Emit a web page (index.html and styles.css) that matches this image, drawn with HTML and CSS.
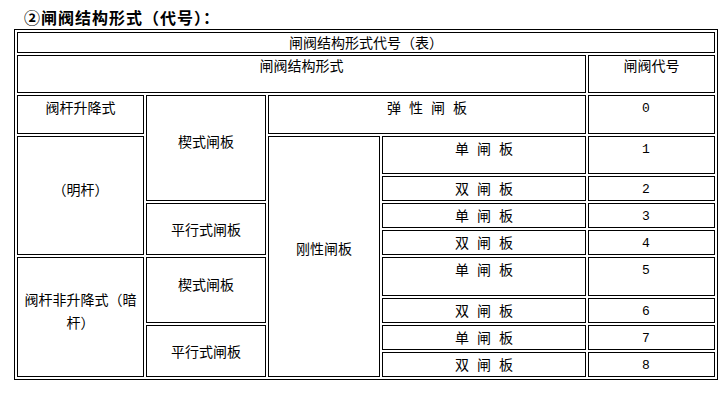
FILE: index.html
```html
<!DOCTYPE html>
<html lang="zh-CN">
<head>
<meta charset="utf-8">
<title>闸阀结构形式（代号）</title>
<link rel="stylesheet" href="styles.css">
</head>
<body>
<div class="page">
  <h3 class="title">②闸阀结构形式（代号）：</h3>
  <table class="gate">
    <colgroup>
      <col class="c1"><col class="c2"><col class="c3"><col class="c4"><col class="c5">
    </colgroup>
    <tr class="head h21">
      <td colspan="5" class="mid">闸阀结构形式代号（表）</td>
    </tr>
    <tr class="head h38">
      <td colspan="4">闸阀结构形式</td>
      <td>闸阀代号</td>
    </tr>
    <tr class="h39">
      <td>阀杆升降式</td>
      <td rowspan="3" class="mid up2">楔式闸板</td>
      <td colspan="2"><span class="sp">弹性闸板</span></td>
      <td class="num">0</td>
    </tr>
    <tr class="h38">
      <td rowspan="4" class="mid up">（明杆）</td>
      <td rowspan="8" class="mid up3">刚性闸板</td>
      <td><span class="sp">单闸板</span></td>
      <td class="num">1</td>
    </tr>
    <tr class="h25">
      <td><span class="sp">双闸板</span></td>
      <td class="num">2</td>
    </tr>
    <tr class="h25">
      <td rowspan="2" class="mid">平行式闸板</td>
      <td><span class="sp">单闸板</span></td>
      <td class="num">3</td>
    </tr>
    <tr class="h25">
      <td><span class="sp">双闸板</span></td>
      <td class="num">4</td>
    </tr>
    <tr class="h39">
      <td rowspan="4" class="mid up">阀杆非升降式（暗杆）</td>
      <td rowspan="2" class="mid up">楔式闸板</td>
      <td><span class="sp">单闸板</span></td>
      <td class="num">5</td>
    </tr>
    <tr class="h25">
      <td><span class="sp">双闸板</span></td>
      <td class="num">6</td>
    </tr>
    <tr class="h25">
      <td rowspan="2" class="mid">平行式闸板</td>
      <td><span class="sp">单闸板</span></td>
      <td class="num">7</td>
    </tr>
    <tr class="h25">
      <td><span class="sp">双闸板</span></td>
      <td class="num">8</td>
    </tr>
  </table>
</div>
</body>
</html>
```

FILE: styles.css
```css
html, body {
  margin: 0;
  background: #fff;
  color: #000;
  font-family: "Noto Sans CJK SC", sans-serif;
}

.page {
  padding: 7px 0 0 14px;
}

.title {
  margin: 0 0 2px 10px;
  font-size: 16px;
  line-height: 20px;
  font-weight: bold;
  letter-spacing: 1px;
}

.gate {
  border: 1px solid #000;
  border-spacing: 2px;
  table-layout: fixed;
  width: 704px;
  font-size: 14px;
  line-height: 23px;
}

.gate td {
  border: 1px solid #000;
  padding: 0 1px;
  text-align: center;
  vertical-align: top;
}

.c1 { width: 127px; }
.c2 { width: 120px; }
.c3 { width: 112px; }
.c4 { width: 204px; }
.c5 { width: 127px; }

.head td { line-height: 19px; }

.h21 { height: 21px; }
.h25 { height: 25px; }
.h38 { height: 38px; }
.h39 { height: 39px; }

.gate td.mid { vertical-align: middle; }
.gate td.up { padding-bottom: 12px; }
.gate td.up2 { padding-bottom: 14px; }
.gate td.up3 { padding-bottom: 16px; }

.sp {
  letter-spacing: 8px;
  margin-right: -8px;
}

.gate td.num {
  font-family: "Liberation Mono", monospace;
  font-size: 13px;
  line-height: 21px;
  padding-top: 2px;
  padding-right: 12px;
}
```
